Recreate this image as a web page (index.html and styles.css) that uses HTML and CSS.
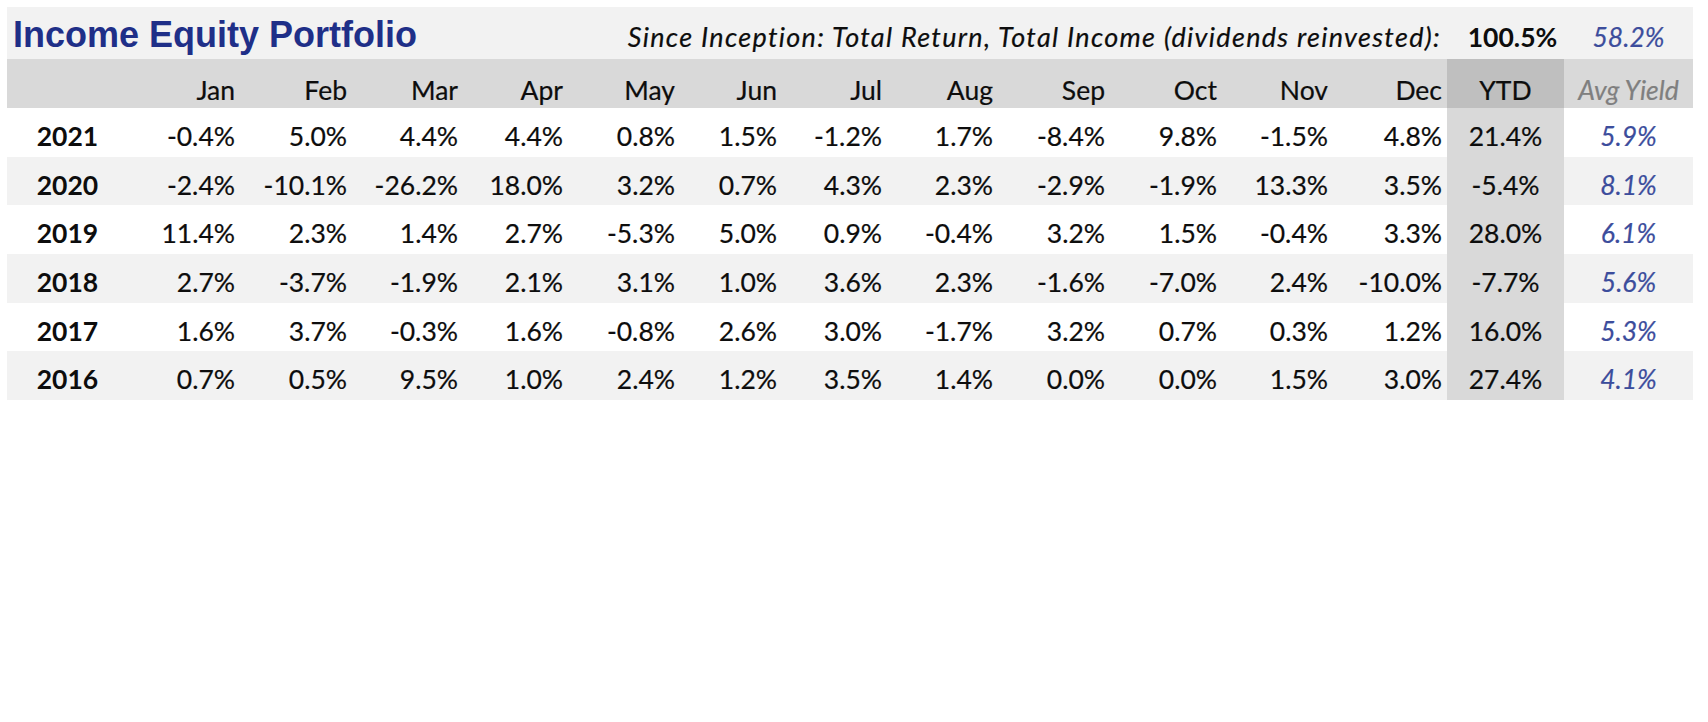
FILE: index.html
```html
<!DOCTYPE html>
<html lang="en">
<head>
<meta charset="utf-8">
<title>Income Equity Portfolio</title>
<link rel="stylesheet" href="styles.css">
</head>
<body>
<div class="sheet">
  <div class="row band">
    <div class="cell title">Income Equity Portfolio</div>
    <div class="cell since">Since Inception: Total Return, Total Income (dividends reinvested):</div>
    <div class="cell total">100.5%</div>
    <div class="cell avg">58.2%</div>
  </div>
  <div class="row head">
    <div class="cell year"></div>
    <div class="cell m">Jan</div>
    <div class="cell m">Feb</div>
    <div class="cell m">Mar</div>
    <div class="cell m">Apr</div>
    <div class="cell m">May</div>
    <div class="cell m">Jun</div>
    <div class="cell m">Jul</div>
    <div class="cell m">Aug</div>
    <div class="cell m">Sep</div>
    <div class="cell m">Oct</div>
    <div class="cell m">Nov</div>
    <div class="cell m">Dec</div>
    <div class="cell ytd">YTD</div>
    <div class="cell avg avg-head">Avg Yield</div>
  </div>
  <div class="row">
    <div class="cell year">2021</div>
    <div class="cell m">-0.4%</div><div class="cell m">5.0%</div><div class="cell m">4.4%</div><div class="cell m">4.4%</div>
    <div class="cell m">0.8%</div><div class="cell m">1.5%</div><div class="cell m">-1.2%</div><div class="cell m">1.7%</div>
    <div class="cell m">-8.4%</div><div class="cell m">9.8%</div><div class="cell m">-1.5%</div><div class="cell m">4.8%</div>
    <div class="cell ytd">21.4%</div><div class="cell avg">5.9%</div>
  </div>
  <div class="row alt">
    <div class="cell year">2020</div>
    <div class="cell m">-2.4%</div><div class="cell m">-10.1%</div><div class="cell m">-26.2%</div><div class="cell m">18.0%</div>
    <div class="cell m">3.2%</div><div class="cell m">0.7%</div><div class="cell m">4.3%</div><div class="cell m">2.3%</div>
    <div class="cell m">-2.9%</div><div class="cell m">-1.9%</div><div class="cell m">13.3%</div><div class="cell m">3.5%</div>
    <div class="cell ytd">-5.4%</div><div class="cell avg">8.1%</div>
  </div>
  <div class="row">
    <div class="cell year">2019</div>
    <div class="cell m">11.4%</div><div class="cell m">2.3%</div><div class="cell m">1.4%</div><div class="cell m">2.7%</div>
    <div class="cell m">-5.3%</div><div class="cell m">5.0%</div><div class="cell m">0.9%</div><div class="cell m">-0.4%</div>
    <div class="cell m">3.2%</div><div class="cell m">1.5%</div><div class="cell m">-0.4%</div><div class="cell m">3.3%</div>
    <div class="cell ytd">28.0%</div><div class="cell avg">6.1%</div>
  </div>
  <div class="row alt">
    <div class="cell year">2018</div>
    <div class="cell m">2.7%</div><div class="cell m">-3.7%</div><div class="cell m">-1.9%</div><div class="cell m">2.1%</div>
    <div class="cell m">3.1%</div><div class="cell m">1.0%</div><div class="cell m">3.6%</div><div class="cell m">2.3%</div>
    <div class="cell m">-1.6%</div><div class="cell m">-7.0%</div><div class="cell m">2.4%</div><div class="cell m">-10.0%</div>
    <div class="cell ytd">-7.7%</div><div class="cell avg">5.6%</div>
  </div>
  <div class="row">
    <div class="cell year">2017</div>
    <div class="cell m">1.6%</div><div class="cell m">3.7%</div><div class="cell m">-0.3%</div><div class="cell m">1.6%</div>
    <div class="cell m">-0.8%</div><div class="cell m">2.6%</div><div class="cell m">3.0%</div><div class="cell m">-1.7%</div>
    <div class="cell m">3.2%</div><div class="cell m">0.7%</div><div class="cell m">0.3%</div><div class="cell m">1.2%</div>
    <div class="cell ytd">16.0%</div><div class="cell avg">5.3%</div>
  </div>
  <div class="row alt">
    <div class="cell year">2016</div>
    <div class="cell m">0.7%</div><div class="cell m">0.5%</div><div class="cell m">9.5%</div><div class="cell m">1.0%</div>
    <div class="cell m">2.4%</div><div class="cell m">1.2%</div><div class="cell m">3.5%</div><div class="cell m">1.4%</div>
    <div class="cell m">0.0%</div><div class="cell m">0.0%</div><div class="cell m">1.5%</div><div class="cell m">3.0%</div>
    <div class="cell ytd">27.4%</div><div class="cell avg">4.1%</div>
  </div>
</div>
</body>
</html>
```
FILE: styles.css
```css
html, body {
  margin: 0;
  padding: 0;
  background: #ffffff;
}

body {
  font-family: Lato, "Open Sans", sans-serif;
  color: #0d0d0d;
}

.sheet {
  margin: 7px 0 0 7px;
  width: 1686px;
  display: flex;
  flex-direction: column;
}

.row {
  display: grid;
  grid-template-columns: 121px 112px 112px 111px 105px 112px 102px 105px 111px 112px 112px 111px 114px 117px 129px;
  height: 48.67px;
  background: #ffffff;
  font-size: 26.5px;
  line-height: 1;
}

.row.alt {
  background: #f2f2f2;
}

.row.band {
  height: 52px;
  background: #f2f2f2;
}

.row.head {
  height: 49px;
  background: #d9d9d9;
}

.cell {
  display: flex;
  align-items: flex-end;
  padding-bottom: 7px;
  white-space: nowrap;
  box-sizing: border-box;
  -webkit-text-stroke: 0.2px currentColor;
}

.head .cell {
  padding-bottom: 5px;
}

.year {
  justify-content: center;
  font-weight: 700;
  -webkit-text-stroke: 0;
}

.m {
  justify-content: flex-end;
  padding-right: 5px;
}

.ytd {
  justify-content: center;
  background: #d9d9d9;
}

.head .ytd {
  background: #bfbfbf;
}

.avg {
  justify-content: center;
  font-style: italic;
  color: #3c4d9c;
}

.avg-head {
  color: #7f7f7f;
}

.title {
  grid-column: 1 / span 4;
  font-family: "Liberation Sans", Arial, sans-serif;
  font-weight: 700;
  font-size: 36px;
  color: #1f2f88;
  padding-left: 6px;
  padding-bottom: 6px;
  -webkit-text-stroke: 0;
}

.since {
  grid-column: 5 / span 9;
  justify-content: flex-end;
  font-style: italic;
  font-size: 27px;
  letter-spacing: 1.3px;
  padding-right: 6px;
  padding-bottom: 9px;
}

.band .total {
  justify-content: center;
  font-weight: 700;
  padding-left: 14px;
  padding-bottom: 9px;
  -webkit-text-stroke: 0;
}

.band .avg {
  padding-bottom: 9px;
}
```
